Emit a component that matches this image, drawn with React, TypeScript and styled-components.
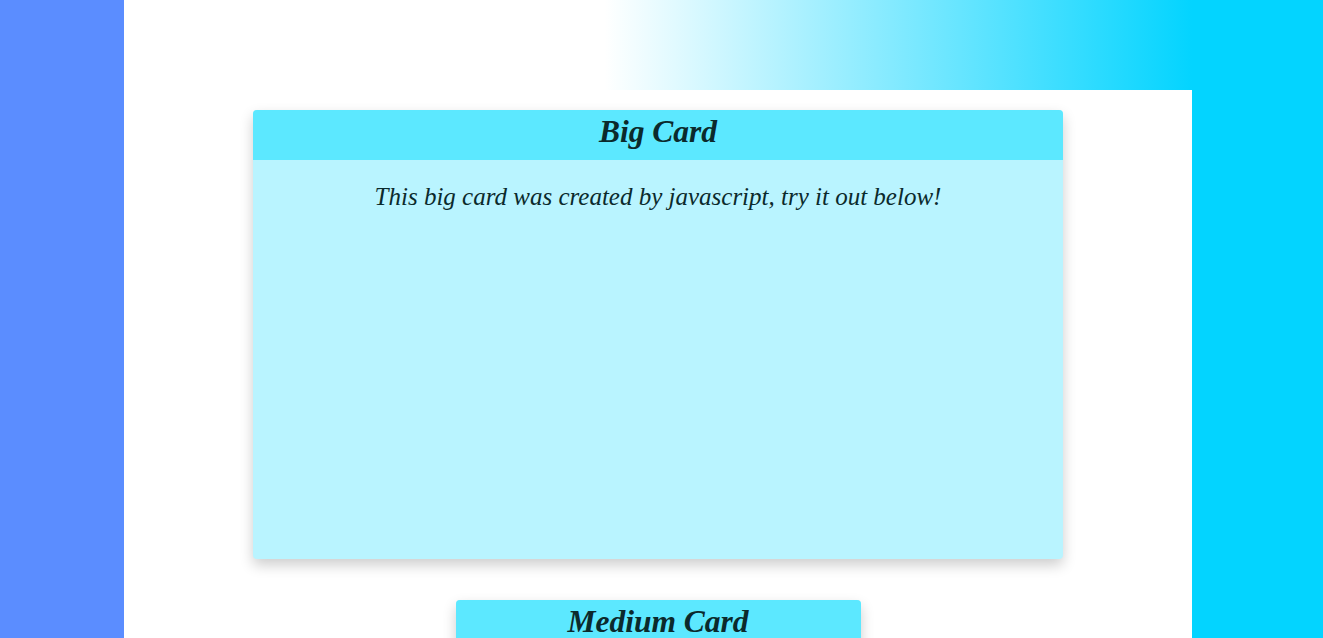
import React from "react";
import styled, { createGlobalStyle } from "styled-components";

const Global = createGlobalStyle`
  html, body { margin: 0; padding: 0; overflow: hidden; }
  body { font-family: "Liberation Serif", serif; }
`;

const Page = styled.div`
  display: flex;
  height: 100vh;
  width: 100%;
  overflow: hidden;
`;

const SideLeft = styled.div`
  width: 124px;
  flex: none;
  background: #5b8dff;
`;

const SideRight = styled.div`
  width: 131px;
  flex: none;
  background: #03d4ff;
`;

const Main = styled.main`
  flex: 1;
  background: #ffffff;
  display: flex;
  flex-direction: column;
  align-items: center;
  overflow: hidden;
`;

const Header = styled.header`
  align-self: stretch;
  height: 90px;
  flex: none;
  background: linear-gradient(to right, #ffffff 0%, #ffffff 45%, #03d4ff 100%);
`;

const Card = styled.section<{ $w: number; $h: number; $gap: number }>`
  width: ${(p) => p.$w}px;
  height: ${(p) => p.$h}px;
  margin-top: ${(p) => p.$gap}px;
  background: #b9f4ff;
  border-radius: 4px;
  box-shadow: 0 6px 14px rgba(0, 0, 0, 0.2);
  overflow: hidden;
  display: flex;
  flex-direction: column;
  flex: none;
`;

const CardTitle = styled.h2`
  margin: 0;
  height: 50px;
  background: #5ce8ff;
  color: #0b2a2c;
  font-style: italic;
  font-weight: 700;
  font-size: 31.5px;
  line-height: 44px;
  text-align: center;
`;

const CardText = styled.p`
  margin: 23px 0 0;
  color: #0b2a2c;
  font-style: italic;
  font-size: 25px;
  text-align: center;
`;

export default function App() {
  return (
    <>
      <Global />
      <Page>
        <SideLeft />
        <Main>
          <Header />
          <Card $w={810} $h={449} $gap={20}>
            <CardTitle>Big Card</CardTitle>
            <CardText>This big card was created by javascript, try it out below!</CardText>
          </Card>
          <Card $w={405} $h={300} $gap={41}>
            <CardTitle>Medium Card</CardTitle>
          </Card>
        </Main>
        <SideRight />
      </Page>
    </>
  );
}
